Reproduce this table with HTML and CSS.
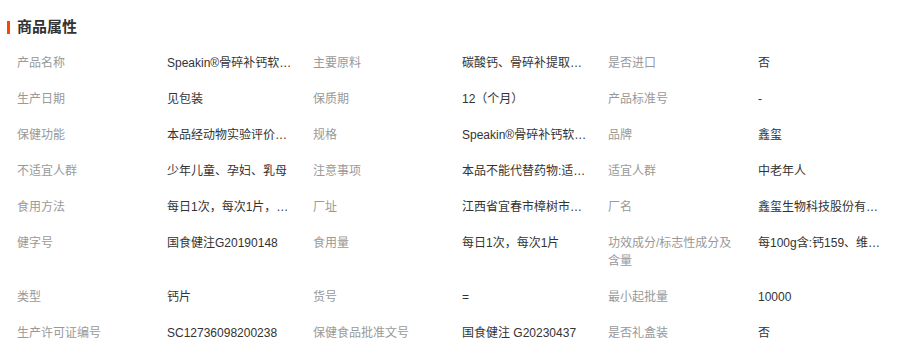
FILE: index.html
```html
<!DOCTYPE html>
<html lang="zh-CN">
<head>
<meta charset="utf-8">
<title>商品属性</title>
<link rel="stylesheet" href="styles.css">
</head>
<body>
<div class="attrs">
  <h2 class="title"><span class="bar"></span>商品属性</h2>
  <div class="grid">
    <div class="k">产品名称</div><div class="v">Speakin®骨碎补钙软胶囊</div>
    <div class="k">主要原料</div><div class="v">碳酸钙、骨碎补提取物、维生素D3</div>
    <div class="k">是否进口</div><div class="v">否</div>

    <div class="k">生产日期</div><div class="v">见包装</div>
    <div class="k">保质期</div><div class="v">12（个月）</div>
    <div class="k">产品标准号</div><div class="v">-</div>

    <div class="k">保健功能</div><div class="v">本品经动物实验评价，具有增加骨密度的保健功能</div>
    <div class="k">规格</div><div class="v">Speakin®骨碎补钙软胶囊</div>
    <div class="k">品牌</div><div class="v">鑫玺</div>

    <div class="k">不适宜人群</div><div class="v">少年儿童、孕妇、乳母</div>
    <div class="k">注意事项</div><div class="v">本品不能代替药物:适宜人群外的人群不推荐食用</div>
    <div class="k">适宜人群</div><div class="v">中老年人</div>

    <div class="k">食用方法</div><div class="v">每日1次，每次1片，口服</div>
    <div class="k">厂址</div><div class="v">江西省宜春市樟树市工业园</div>
    <div class="k">厂名</div><div class="v">鑫玺生物科技股份有限公司</div>

    <div class="k">健字号</div><div class="v">国食健注G20190148</div>
    <div class="k">食用量</div><div class="v">每日1次，每次1片</div>
    <div class="k">功效成分/标志性成分及含量</div><div class="v">每100g含:钙159、维生素D3</div>

    <div class="k">类型</div><div class="v">钙片</div>
    <div class="k">货号</div><div class="v">=</div>
    <div class="k">最小起批量</div><div class="v">10000</div>

    <div class="k">生产许可证编号</div><div class="v">SC12736098200238</div>
    <div class="k">保健食品批准文号</div><div class="v">国食健注 G20230437</div>
    <div class="k">是否礼盒装</div><div class="v">否</div>
  </div>
</div>
</body>
</html>
```

FILE: styles.css
```css
html, body {
  margin: 0;
  padding: 0;
  background: #fff;
}
body {
  font-family: "Liberation Sans", "Noto Sans CJK SC", sans-serif;
  font-size: 12px;
  color: #333;
}
.attrs {
  padding: 17px 0 0 7px;
}
.title {
  display: flex;
  align-items: center;
  margin: 0;
  height: 20px;
  font-size: 15px;
  font-weight: bold;
  color: #333;
  line-height: 20px;
}
.bar {
  display: inline-block;
  width: 3px;
  height: 13px;
  background: #ff4400;
  margin-right: 7px;
}
.grid {
  display: grid;
  grid-template-columns: 150px 146px 149px 146px 150px 1fr;
  padding-left: 10px;
  margin-top: 8px;
}
.k, .v {
  line-height: 18px;
  padding: 9px 0;
}
.k {
  color: #999;
  padding-right: 20px;
}
.v {
  color: #333;
  padding-right: 19px;
  white-space: nowrap;
  overflow: hidden;
  text-overflow: ellipsis;
}
```
